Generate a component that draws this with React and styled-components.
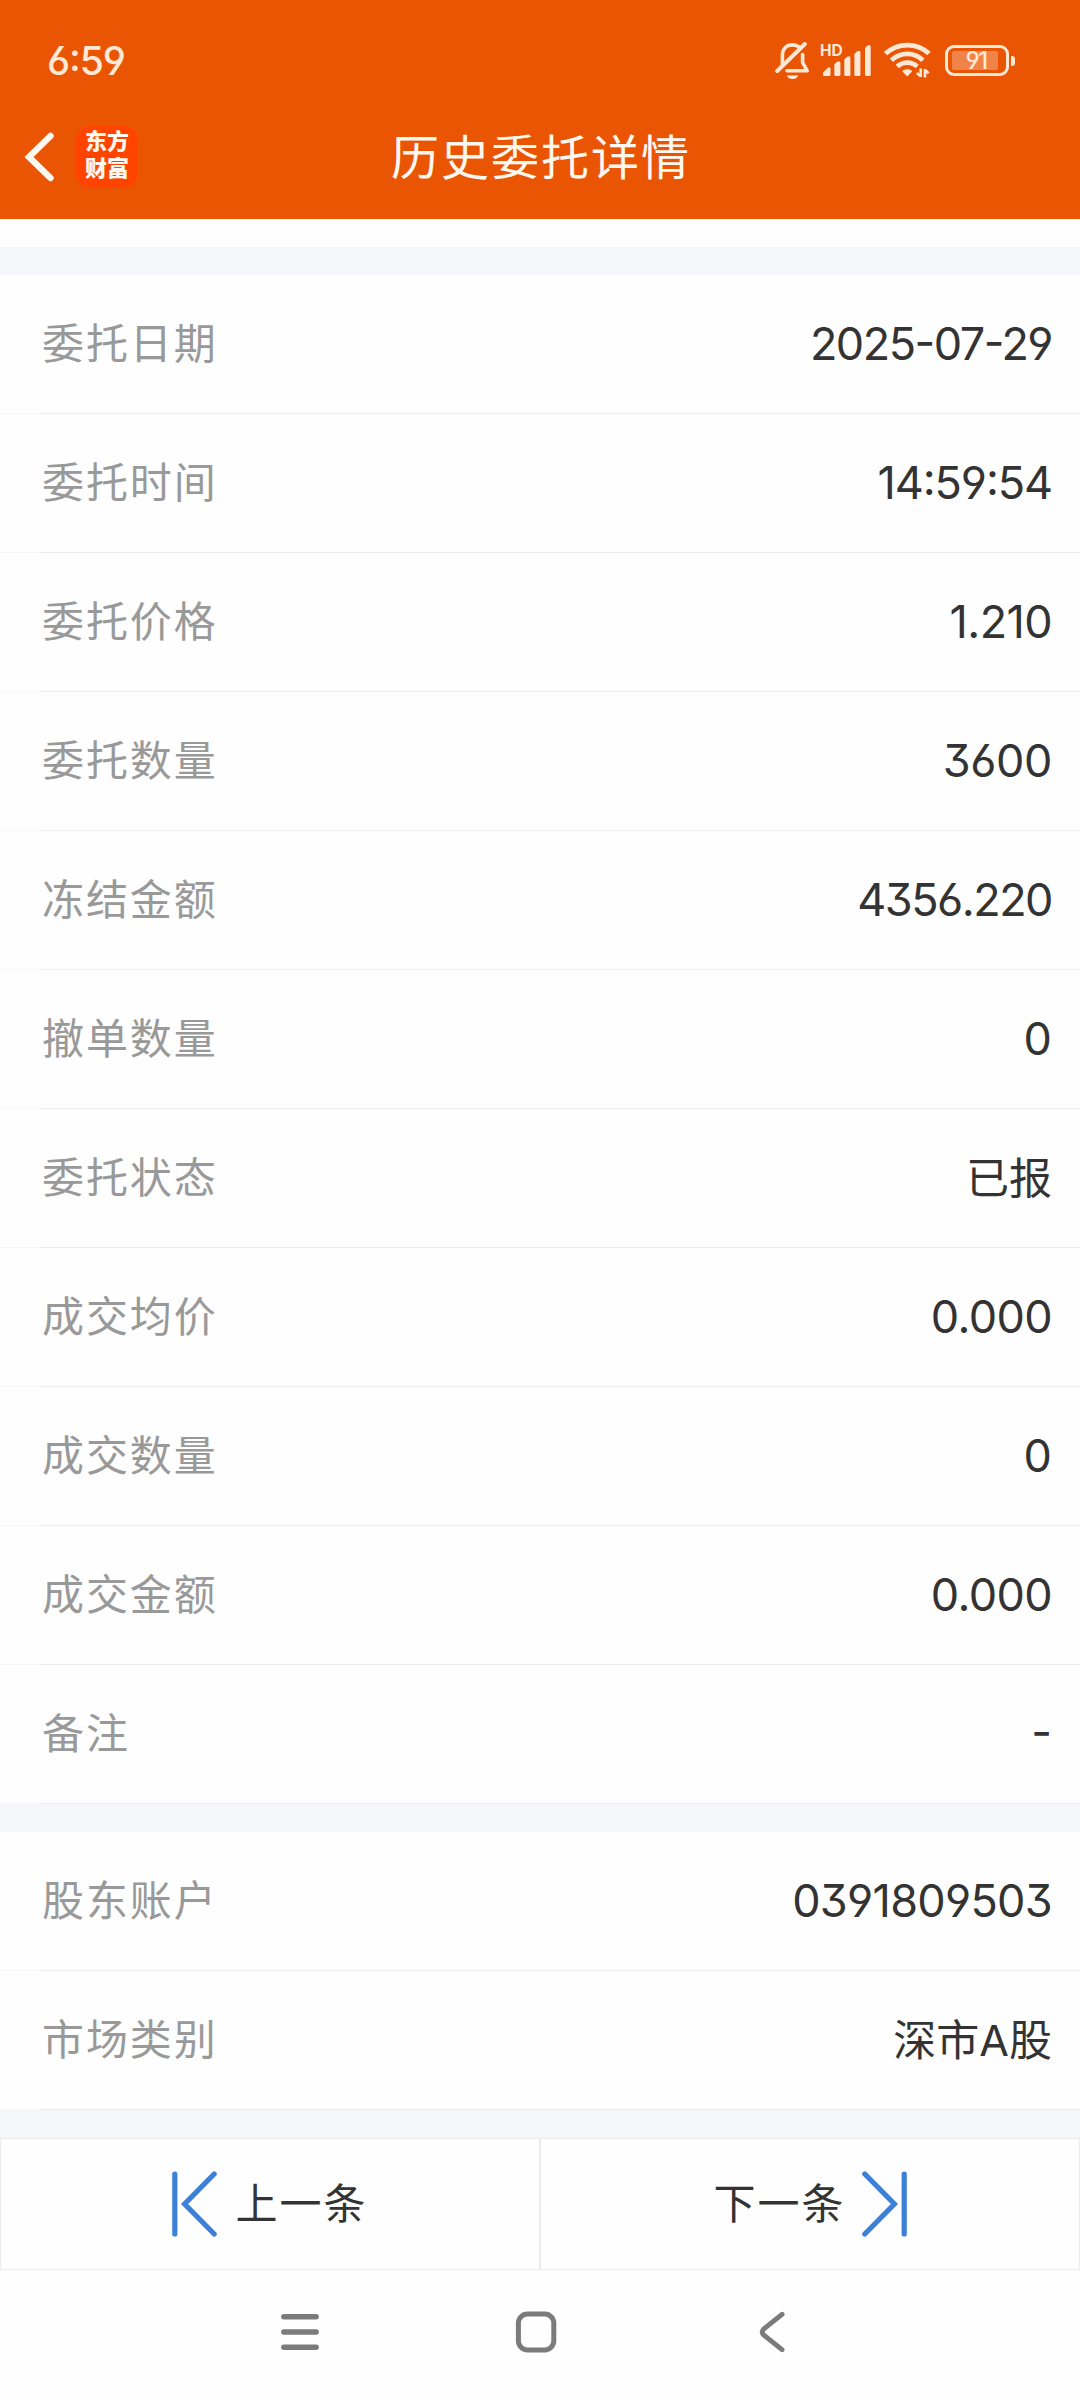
import React from "react";
import styled, { createGlobalStyle } from "styled-components";

const orderRows = [
  { label: "委托日期", value: "2025-07-29", tracking: -1.5 },
  { label: "委托时间", value: "14:59:54", tracking: -1.1 },
  { label: "委托价格", value: "1.210", tracking: -0.6 },
  { label: "委托数量", value: "3600", tracking: -0.4 },
  { label: "冻结金额", value: "4356.220", tracking: -1.5 },
  { label: "撤单数量", value: "0" },
  { label: "委托状态", value: "已报", chinese: true },
  { label: "成交均价", value: "0.000", tracking: -0.6 },
  { label: "成交数量", value: "0" },
  { label: "成交金额", value: "0.000", tracking: -0.6 },
  { label: "备注", value: "-" },
];

const accountRows = [
  { label: "股东账户", value: "0391809503", tracking: -0.7 },
  { label: "市场类别", value: "深市A股", chinese: true },
];

const StatusIcons = () => {
  return (
    <Icons>
      <svg width="36" height="40" viewBox="0 0 36 40" fill="none">
        <path
          d="M7.4 23.5V14.5C7.4 8 11.5 3.9 17.5 3.9C20.3 3.9 22.6 4.7 24.3 6.2M27.6 13.5V21.5L32.2 29.8H12"
          stroke="#ffe9d6"
          strokeWidth="3.6"
          strokeLinejoin="round"
          strokeLinecap="round"
        />
        <path d="M2.2 30L29.8 3" stroke="#ffe9d6" strokeWidth="4" strokeLinecap="round" />
        <path d="M11.8 34.4H23.2C22.4 36.6 20.3 38 17.5 38S12.6 36.6 11.8 34.4Z" fill="#ffe9d6" />
      </svg>
      <Signal>
        <Hd>HD</Hd>
        <svg width="48" height="31" viewBox="0 0 48 31" fill="#ffe9d6">
          <path d="M0 27.5L5.2 22.5Q7.5 21.6 7.5 24V29.5Q7.5 31 6 31H1.2Q0 31 0 29.5Z" />
          <path d="M11.3 19.5Q14 16.2 16 16.2Q17.4 16.2 17.4 18V29.5Q17.4 31 16 31H12.7Q11.3 31 11.3 29.5Z" />
          <path d="M21.3 14.5Q24 11.2 26 11.2Q27.4 11.2 27.4 13V29.5Q27.4 31 26 31H22.7Q21.3 31 21.3 29.5Z" />
          <path d="M31.4 9Q34 5.7 36 5.7Q37.4 5.7 37.4 7.5V29.5Q37.4 31 36 31H32.8Q31.4 31 31.4 29.5Z" />
          <path d="M42 3.3Q44.4 0 46.4 0Q47.7 0 47.7 1.8V29.5Q47.7 31 46.3 31H43.4Q42 31 42 29.5Z" />
        </svg>
      </Signal>
      <Wifi width="47" height="36" viewBox="0 0 47 36" fill="none">
        <g stroke="#ffe9d6" strokeWidth="4.8">
          <path d="M1.5 11.6C14 0.2 33 0.2 45 11.6" />
          <path d="M7.4 18.2C16.5 9.8 30 9.8 39 18.2" />
          <path d="M13.3 24.6C19 19.3 27.6 19.3 33.2 24.6" />
        </g>
        <path d="M18.2 29.2C21 26.6 25.4 26.6 28.2 29.2L23.2 34.6Z" fill="#ffe9d6" />
        <path
          d="M36.7 26.5V35M36.7 34.2L32.8 31M41 35.5V27M41 27.6L44.6 31.4"
          stroke="#ffe9d6"
          strokeWidth="2.6"
        />
      </Wifi>
      <Battery>
        <Charge>91</Charge>
      </Battery>
    </Icons>
  );
};

const Section = ({ rows }) => {
  return (
    <List>
      {rows.map((row) => (
        <Row key={row.label}>
          <Label>{row.label}</Label>
          <Value $tracking={row.tracking} $chinese={row.chinese}>
            {row.value}
          </Value>
        </Row>
      ))}
    </List>
  );
};

const App = () => {
  return (
    <Page>
      <GlobalStyle />
      <Header>
        <StatusBar>
          <Clock>6:59</Clock>
          <StatusIcons />
        </StatusBar>
        <TitleBar>
          <svg width="32" height="52" viewBox="0 0 32 52" fill="none">
            <path
              d="M27.5 5L6 26L27.5 47"
              stroke="#fff8f0"
              strokeWidth="6.4"
              strokeLinecap="round"
            />
          </svg>
          <Logo>
            <span>东方</span>
            <span>财富</span>
          </Logo>
          <Title>历史委托详情</Title>
        </TitleBar>
      </Header>
      <Blank />
      <Gap />
      <Section rows={orderRows} />
      <Gap />
      <Section rows={accountRows} />
      <Gap />
      <Pager>
        <PagerButton>
          <svg width="46" height="66" viewBox="0 0 46 66" fill="none">
            <path
              d="M2.8 3V63M42.2 3L12.6 33L42.2 63"
              stroke="#3d80d8"
              strokeWidth="5.2"
              strokeLinecap="round"
            />
          </svg>
          <PagerText>上一条</PagerText>
        </PagerButton>
        <PagerButton>
          <PagerText>下一条</PagerText>
          <svg width="46" height="66" viewBox="0 0 46 66" fill="none">
            <path
              d="M43.2 3V63M3.8 3L33.4 33L3.8 63"
              stroke="#3d80d8"
              strokeWidth="5.2"
              strokeLinecap="round"
            />
          </svg>
        </PagerButton>
      </Pager>
      <SystemNav>
        <svg width="42" height="42" viewBox="0 0 42 42" fill="none">
          <path
            d="M4.8 5.7H37.2M4.8 21H37.2M4.8 36.3H37.2"
            stroke="#7b7b7b"
            strokeWidth="5.4"
            strokeLinecap="round"
          />
        </svg>
        <svg width="42" height="42" viewBox="0 0 42 42" fill="none">
          <rect x="3.4" y="3.1" width="35.4" height="35.8" rx="9" stroke="#7b7b7b" strokeWidth="5" />
        </svg>
        <svg width="42" height="42" viewBox="0 0 42 42" fill="none">
          <path
            d="M31 3.4L13.2 17.6Q9.2 21 13.2 24.4L31 38.6"
            stroke="#7b7b7b"
            strokeWidth="5"
            strokeLinecap="round"
          />
        </svg>
      </SystemNav>
    </Page>
  );
};

export default App;

const GlobalStyle = createGlobalStyle`
  * {
    box-sizing: border-box;
  }
  body {
    margin: 0;
    background-color: #fdfdfd;
  }
  svg {
    display: block;
    flex-shrink: 0;
  }
`;

const Page = styled.div`
  width: 1080px;
  height: 2400px;
  display: flex;
  flex-direction: column;
  overflow: hidden;
  background-color: #fefefe;
  color: #333333;
  font-family: Inter, "Noto Sans CJK SC", sans-serif;
  font-feature-settings: "cv03", "cv04", "cv09", "case";
`;

const Header = styled.header`
  height: 219px;
  background-color: #ea5504;
  color: #fff8f0;
`;

const StatusBar = styled.div`
  height: 120px;
  display: flex;
  justify-content: space-between;
  padding: 0 65px 0 47px;
  color: #ffe9d6;
`;

const Clock = styled.div`
  font-size: 39px;
  font-weight: 500;
  line-height: 121px;
  letter-spacing: -1.1px;
`;

const Icons = styled.div`
  display: flex;
  align-items: flex-start;
  padding-top: 41px;
`;

const Signal = styled.div`
  position: relative;
  margin: 4px 0 0 12px;
`;

const Hd = styled.span`
  position: absolute;
  top: 0;
  left: -3px;
  font-size: 15.5px;
  font-weight: 700;
  line-height: 12px;
`;

const Wifi = styled.svg`
  margin: 1px 0 0 13px;
`;

const Battery = styled.div`
  position: relative;
  width: 64px;
  height: 31px;
  margin: 4px 6px 0 14px;
  padding: 3px 8px 3px 4px;
  border: 3px solid #ffe9d6;
  border-radius: 9px;

  &::after {
    content: "";
    position: absolute;
    top: 8px;
    right: -9px;
    width: 4px;
    height: 10px;
    border-radius: 0 3px 3px 0;
    background-color: #ffe9d6;
  }
`;

const Charge = styled.div`
  height: 19px;
  padding-left: 2px;
  border-radius: 2px;
  background-color: #f08347;
  font-size: 24px;
  font-weight: 500;
  line-height: 19px;
  letter-spacing: -1.5px;
  text-align: center;
`;

const TitleBar = styled.div`
  position: relative;
  height: 74px;
  display: flex;
  align-items: center;
  padding-left: 23px;
`;

const Logo = styled.div`
  width: 62px;
  height: 62px;
  margin-left: 21px;
  padding-top: 2px;
  border-radius: 14px;
  background-color: #ff4400;
  font-size: 22px;
  font-weight: 900;
  line-height: 27px;
  text-align: center;

  span {
    display: block;
  }
`;

const Title = styled.h1`
  position: absolute;
  inset: 0;
  margin: 0;
  padding-left: 2px;
  font-size: 48px;
  font-weight: 400;
  line-height: 76px;
  letter-spacing: 2px;
  text-align: center;
`;

const Blank = styled.div`
  height: 28px;
`;

const Gap = styled.div`
  height: 28px;
  background-color: #f6f7fa;
`;

const List = styled.div`
  display: flex;
  flex-direction: column;
`;

const Row = styled.div`
  height: 139px;
  display: flex;
  align-items: center;
  justify-content: space-between;
  padding: 0 28px 0 42px;
  border-bottom: 1px solid;
  border-image: linear-gradient(to right, #f7f7f7 41px, #ececec 41px) 1;
`;

const Label = styled.span`
  padding-bottom: 7px;
  color: #999999;
  font-size: 42px;
  letter-spacing: 1.9px;
`;

const Value = styled.span`
  padding-bottom: ${(props) => (props.$chinese ? 7 : 1)}px;
  font-size: ${(props) => (props.$chinese ? 43 : 45)}px;
  letter-spacing: ${(props) => props.$tracking || 0}px;
`;

const Pager = styled.div`
  height: 132px;
  display: grid;
  grid-template-columns: 1fr 1fr;
`;

const PagerButton = styled.button`
  display: flex;
  align-items: center;
  justify-content: center;
  gap: 17px;
  padding: 0;
  border: 1px solid #ececec;
  background: none;
  color: #333333;
  font-family: inherit;
  font-size: 42px;
  letter-spacing: 2px;

  svg:last-child {
    margin-left: -2px;
  }
`;

const PagerText = styled.span`
  padding-bottom: 8px;
`;

const SystemNav = styled.nav`
  display: flex;
  justify-content: center;
  gap: 194px;
  padding: 41px 9px 0 0;
`;
